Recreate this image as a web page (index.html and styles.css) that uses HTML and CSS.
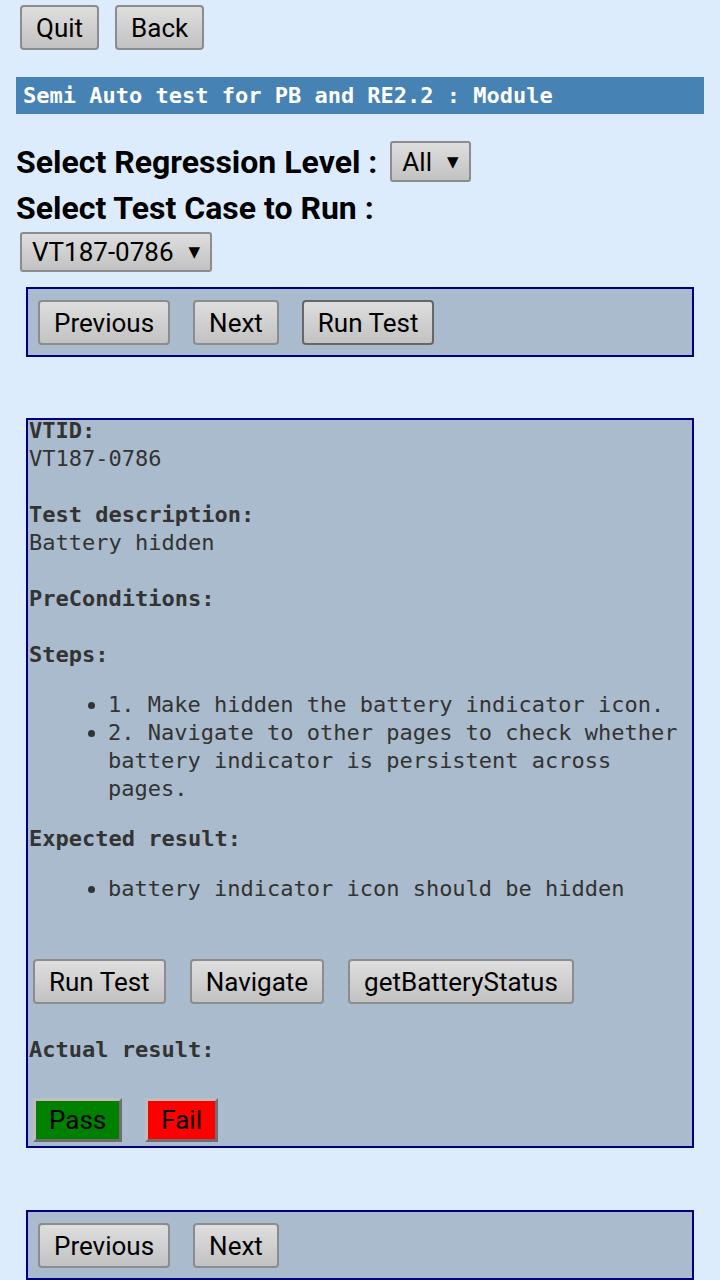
FILE: index.html
```html
<!DOCTYPE html>
<html>
<head>
<meta charset="utf-8">
<link rel="stylesheet" href="styles.css">
</head>
<body>
<div class="top">
  <button class="btn">Quit</button>
  <button class="btn">Back</button>
</div>
<div class="title">Semi Auto test for PB and RE2.2 : Module</div>
<div class="row1">
  <span class="label">Select Regression Level :</span>
  <span class="select sel-level"><span>All</span><span class="arrow">▼</span></span>
</div>
<div class="label row2">Select Test Case to Run :</div>
<div class="row3">
  <span class="select sel-case"><span>VT187-0786</span><span class="arrow">▼</span></span>
</div>
<div class="panel nav">
  <button class="btn">Previous</button>
  <button class="btn">Next</button>
  <button class="btn focus">Run Test</button>
</div>
<div class="panel detail">
  <div class="line b first">VTID:</div>
  <div class="line">VT187-0786</div>
  <div class="line">&nbsp;</div>
  <div class="line b">Test description:</div>
  <div class="line">Battery hidden</div>
  <div class="line">&nbsp;</div>
  <div class="line b">PreConditions:</div>
  <div class="line">&nbsp;</div>
  <div class="line b">Steps:</div>
  <ul class="list">
    <li>1. Make hidden the battery indicator icon.</li>
    <li>2. Navigate to other pages to check whether battery indicator is persistent across pages.</li>
  </ul>
  <div class="line b">Expected result:</div>
  <ul class="list">
    <li>battery indicator icon should be hidden</li>
  </ul>
  <div class="actions">
    <button class="btn">Run Test</button>
    <button class="btn">Navigate</button>
    <button class="btn">getBatteryStatus</button>
  </div>
  <div class="line b actual">Actual result:</div>
  <div class="verdict">
    <button class="vbtn pass">Pass</button>
    <button class="vbtn fail">Fail</button>
  </div>
</div>
<div class="panel nav last">
  <button class="btn">Previous</button>
  <button class="btn">Next</button>
</div>
</body>
</html>
```
FILE: styles.css
```css
html, body {
  margin: 0;
  padding: 0;
  background: #dcecfc;
}
body {
  font-family: Roboto, "Liberation Sans", sans-serif;
  color: #000;
  width: 720px;
  overflow: hidden;
}
.btn {
  font-family: Roboto, "Liberation Sans", sans-serif;
  font-size: 26px;
  color: #000;
  height: 45px;
  padding: 0 14px;
  margin: 0;
  background: linear-gradient(#dedede, #c2c2c2);
  border: 2px solid #8c8c8c;
  border-radius: 4px;
  box-sizing: border-box;
}
.btn.focus {
  border-color: #666;
}
.top {
  display: flex;
  gap: 16px;
  padding: 5px 0 0 20px;
}
.title {
  margin: 27px 16px 0;
  height: 37px;
  line-height: 37px;
  background: #4682b4;
  color: #fff;
  font-family: "DejaVu Sans Mono", monospace;
  font-weight: bold;
  font-size: 22px;
  padding-left: 7px;
}
.label {
  font-weight: bold;
  font-size: 32px;
}
.row1 {
  display: flex;
  align-items: center;
  gap: 13px;
  margin: 27px 0 0 16px;
  height: 41px;
}
.row2 {
  margin: 6px 0 0 16px;
  height: 40px;
  line-height: 40px;
}
.row3 {
  margin: 4px 0 0 20px;
  display: flex;
}
.select {
  display: inline-flex;
  align-items: center;
  box-sizing: border-box;
  height: 41px;
  padding: 0 10px 0 10px;
  gap: 15px;
  font-size: 26px;
  background: linear-gradient(#dedede, #c2c2c2);
  border: 2px solid #8c8c8c;
  border-radius: 3px;
}
.sel-case {
  height: 40px;
}
.arrow {
  font-size: 15px;
  font-family: "DejaVu Sans", sans-serif;
}
.panel {
  margin: 0 26px;
  background: #a9bbcc;
  border: 2px solid #000080;
}
.nav {
  display: flex;
  gap: 23px;
  padding: 11px 10px 10px;
  margin-top: 15px;
}
.nav.last {
  margin-top: 62px;
}
.detail {
  margin-top: 61px;
  display: flex;
  flex-direction: column;
  padding: 0 0 4px 0;
  font-family: "DejaVu Sans Mono", monospace;
  font-size: 22px;
  color: #333;
}
.line {
  line-height: 28px;
  height: 28px;
  padding-left: 1px;
  white-space: nowrap;
}
.line.first {
  margin-top: -3px;
}
.b {
  font-weight: bold;
}
.list {
  margin: 22px 0;
  padding-left: 80px;
  line-height: 28px;
}
.actions {
  display: flex;
  gap: 24px;
  margin: 34px 0 0 5px;
}
.actual {
  margin-top: 32px;
}
.verdict {
  display: flex;
  gap: 23px;
  margin: 34px 0 0 5px;
}
.vbtn {
  font-family: Roboto, "Liberation Sans", sans-serif;
  font-size: 26px;
  color: #000;
  height: 44px;
  padding: 0 13px;
  margin: 0;
  border: 3px solid;
  border-color: #bdbdbd #6e6e6e #6e6e6e #bdbdbd;
  border-radius: 0;
  box-sizing: border-box;
}
.pass {
  background: #008000;
}
.fail {
  background: #ff0000;
}
```
